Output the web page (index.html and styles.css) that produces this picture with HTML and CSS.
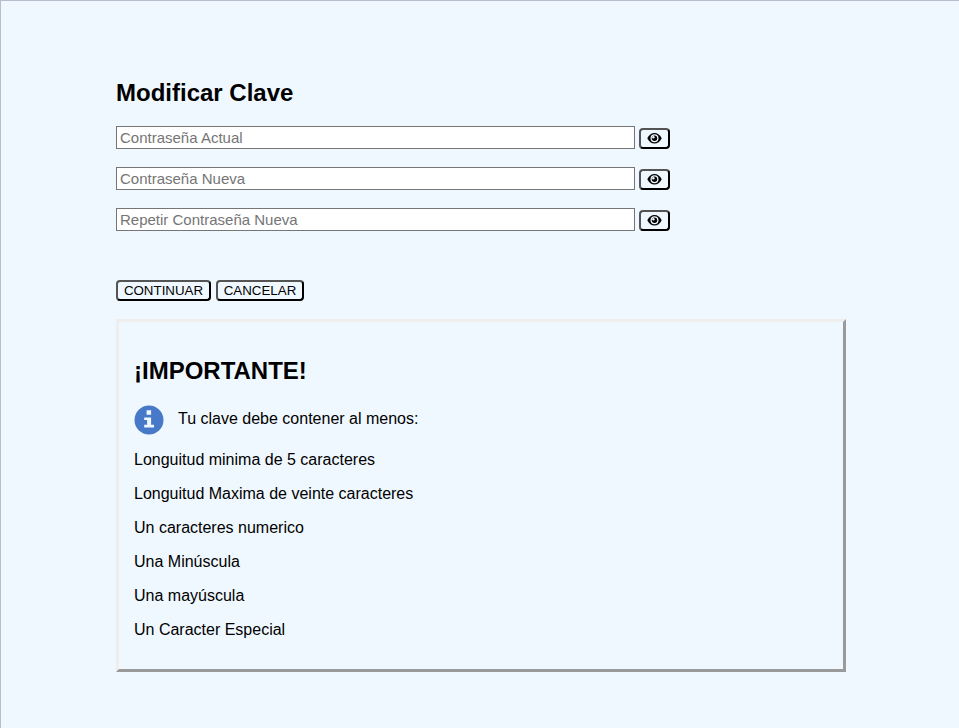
FILE: index.html
```html
<!DOCTYPE html>
<html lang="es">
<head>
<meta charset="utf-8">
<title>Modificar Clave</title>
<link rel="stylesheet" href="styles.css">
</head>
<body>
<svg class="defs" width="0" height="0"><symbol id="eye" viewBox="0 0 15 13"><path d="M0.300 6.300C1.900 3 4.500 1 7.500 1S13.100 3 14.700 6.300C13.100 9.600 10.500 11.600 7.500 11.600S1.900 9.600 0.300 6.300Z"/><circle cx="7.500" cy="6.300" r="4" fill="#f0f8ff"/><circle cx="7.500" cy="6.300" r="2.700"/><circle cx="6.400" cy="5.200" r="1.200" fill="#f0f8ff"/></symbol></svg>
<main class="page">
<h2 class="title">Modificar Clave</h2>
<form class="form">
<div class="row"><input class="field" type="password" placeholder="Contraseña Actual"><button class="btn eye" type="button"><svg><use href="#eye"/></svg></button></div>
<div class="row"><input class="field" type="password" placeholder="Contraseña Nueva"><button class="btn eye" type="button"><svg><use href="#eye"/></svg></button></div>
<div class="row"><input class="field" type="password" placeholder="Repetir Contraseña Nueva"><button class="btn eye" type="button"><svg><use href="#eye"/></svg></button></div>
<div class="actions"><button class="btn go" type="button">CONTINUAR</button><button class="btn cancel" type="button">CANCELAR</button></div>
</form>
<section class="notice">
<h2 class="title">¡IMPORTANTE!</h2>
<div class="lead"><svg class="info" viewBox="0 0 30 30"><circle cx="15" cy="15" r="14.500"/><path d="M12.600 5.200h4.500v4.600h-4.500zM10.200 12.400h6.900v7.400h2.900v2.700h-9.800v-2.700h2.900v-4.700h-2.900z" fill="#f0f8ff"/></svg><span>Tu clave debe contener al menos:</span></div>
<p>Longuitud minima de 5 caracteres</p>
<p>Longuitud Maxima de veinte caracteres</p>
<p>Un caracteres numerico</p>
<p>Una Minúscula</p>
<p>Una mayúscula</p>
<p>Un Caracter Especial</p>
</section>
</main>
</body>
</html>
```
FILE: styles.css
```css
* { box-sizing: border-box; }
body { margin: 0; height: 728px; background: #f0f8ff; color: #000; font: 16px/18px "Liberation Sans", Arial, sans-serif; border-top: 1px solid #b9bdcc; border-left: 1px solid #b9bdcc; overflow: hidden; }
.defs { display: block; height: 0; }
.page { width: 730px; margin: 78px 0 0 115px; }
.title { margin: 0; font-size: 24px; line-height: 28px; font-weight: bold; }
.form { margin-top: 19px; }
.row { display: flex; align-items: center; gap: 4px; height: 23px; margin-bottom: 18px; }
.field { width: 519px; height: 23px; padding: 1px 3px; border: 1px solid #767676; border-radius: 0; background: #fff; font: 15px "Liberation Sans", Arial, sans-serif; }
.field::placeholder { color: #757575; opacity: 1; }
.btn { height: 21px; margin: 0; padding: 0; border: 2px outset #000; border-radius: 4px; background: #f0f8ff; color: #000; font: 13.333px/15px "Liberation Sans", Arial, sans-serif; display: flex; align-items: center; justify-content: center; }
.eye { width: 31px; margin-top: 2px; }
.eye svg { width: 15px; height: 13px; }
.actions { display: flex; gap: 5px; margin-top: 49px; }
.go { width: 95px; }
.cancel { width: 88px; }
.notice { height: 353px; margin-top: 18px; padding: 35px 15px 0; border: 3px outset #eee; background: #f0f8ff; }
.lead { display: flex; align-items: center; gap: 14px; height: 30px; margin-top: 20px; margin-bottom: 16px; }
.info { width: 30px; height: 30px; fill: #4878c8; }
.lead span { margin-top: -3px; }
.notice p { margin: 0 0 16px; }
```
